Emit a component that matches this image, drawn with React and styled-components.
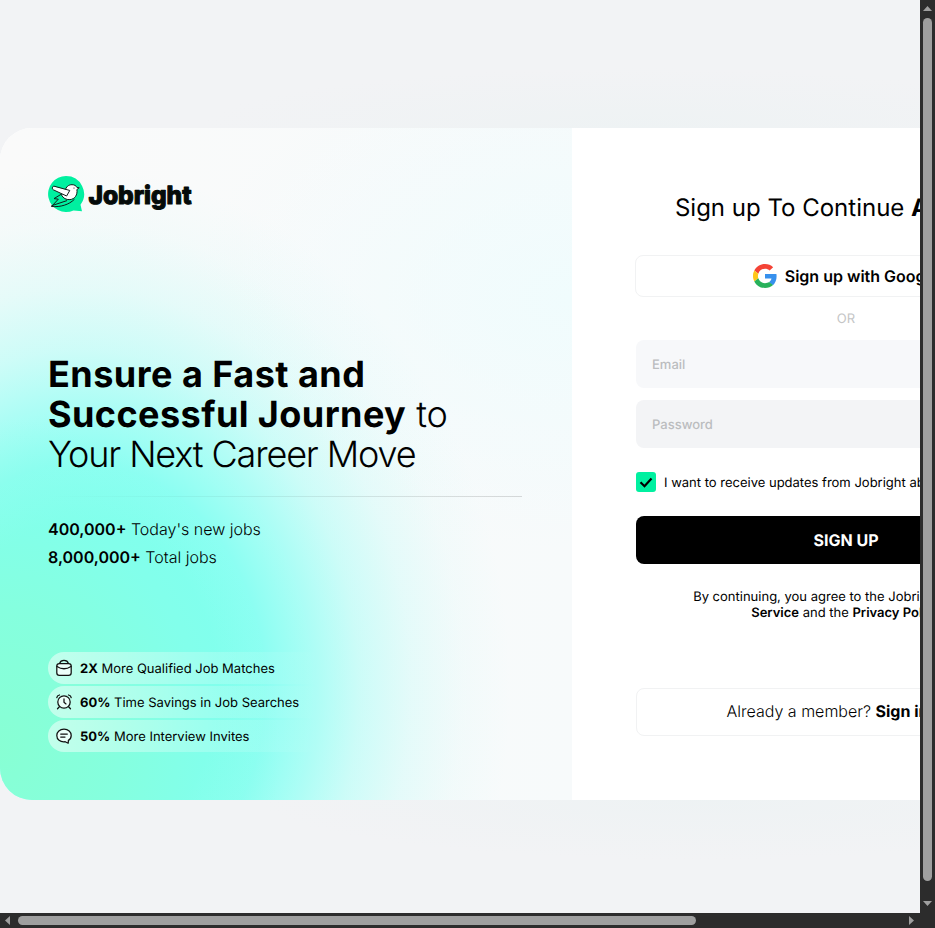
import React from 'react';
import styled, { createGlobalStyle } from 'styled-components';

const GlobalStyle = createGlobalStyle`
  *, *::before, *::after { box-sizing: border-box; }
  body { margin: 0; overflow: hidden; background: #f2f3f5; text-rendering: geometricPrecision; }
  button, input { font: inherit; letter-spacing: inherit; text-rendering: inherit; }
`;

const Viewport = styled.div`
  display: grid;
  grid-template-columns: minmax(0, 1fr) 15px;
  grid-template-rows: minmax(0, 1fr) 15px;
  width: 935px;
  height: 928px;
  overflow: hidden;
  background: #2c2c2c;
  font-family: Inter, "Liberation Sans", sans-serif;
  color: #000;
`;

const Page = styled.main`
  overflow: hidden;
  padding-top: 128px;
  background:
    radial-gradient(ellipse 440px 60px at 640px 128px, rgba(236, 242, 243, 0.7), rgba(236, 242, 243, 0)),
    radial-gradient(ellipse 440px 60px at 700px 800px, rgba(236, 242, 243, 0.7), rgba(236, 242, 243, 0)),
    #f2f3f5;
`;

const Card = styled.div`
  display: flex;
  width: 1120px;
  height: 672px;
  border-radius: 32px;
  overflow: hidden;
  background: #fff;
`;

const Intro = styled.section`
  display: flex;
  flex-direction: column;
  width: 572px;
  padding: 48px;
  background:
    radial-gradient(ellipse 280px 330px at 0 620px, rgba(136, 255, 210, 0.95) 0, rgba(136, 255, 212, 0.65) 40%, rgba(136, 255, 220, 0.27) 72%, rgba(136, 255, 226, 0) 100%),
    radial-gradient(ellipse 430px 520px at 80px 560px, #80fff0 0, #80fff0 32%, rgba(128, 255, 241, 0.9) 43%, rgba(138, 255, 243, 0.7) 54%, rgba(155, 254, 245, 0.47) 65%, rgba(175, 253, 246, 0.27) 77%, rgba(195, 252, 247, 0.11) 89%, rgba(220, 252, 250, 0) 100%),
    radial-gradient(ellipse 380px 250px at 572px 170px, #f0fcfd, rgba(240, 251, 253, 0)),
    linear-gradient(90deg, #fafafa, #f7fafb);
`;

const Logo = styled.svg`
  display: block;
  width: 148px;
  height: 36px;
  flex: none;
`;

const Headline = styled.h1`
  margin: 142px 0 0;
  font-size: 36px;
  line-height: 40px;
  font-weight: 300;
`;

const HeadlineLine = styled.span`
  display: block;
  white-space: nowrap;
  letter-spacing: ${(p) => p.$tracking};
`;

const Strong = styled.strong`
  font-weight: ${(p) => p.$weight || 700};
  letter-spacing: ${(p) => p.$tracking || 'inherit'};
`;

const Divider = styled.hr`
  width: 474px;
  height: 1px;
  flex: none;
  margin: 22px 0 18px;
  border: 0;
  background: linear-gradient(90deg, rgba(0, 0, 0, 0), rgba(0, 0, 0, 0.14));
`;

const Stat = styled.p`
  margin: 0;
  font-size: 16px;
  line-height: 28px;
  font-weight: 300;
`;

const Benefits = styled.ul`
  display: grid;
  gap: 2px;
  margin: auto 0 0;
  padding: 0;
  list-style: none;
`;

const Benefit = styled.li`
  display: flex;
  align-items: center;
  gap: 8px;
  width: 270px;
  height: 32px;
  padding-left: 8px;
  border-radius: 16px 0 0 16px;
  background: linear-gradient(90deg, rgba(255, 255, 255, 0.5), rgba(255, 255, 255, 0));
  font-size: 13px;
  white-space: nowrap;
`;

const SmallLabel = styled.span`
  padding-top: 2px;
`;

const BenefitIcon = styled.svg`
  width: 16px;
  height: 16px;
  flex: none;
  overflow: visible;
  fill: none;
  stroke: #111;
  stroke-width: 1.25;
  stroke-linecap: round;
  stroke-linejoin: round;
`;

const FormPanel = styled.form`
  display: flex;
  flex-direction: column;
  width: 548px;
  padding: 64px;
`;

const Title = styled.h2`
  margin: 0;
  font-size: 24px;
  line-height: 32px;
  font-weight: 400;
  text-align: center;
  white-space: nowrap;
`;

const GoogleButton = styled.button`
  display: flex;
  align-items: center;
  justify-content: center;
  gap: 7.5px;
  width: 421px;
  height: 42px;
  margin: 31px 0 0 -1px;
  padding: 0 0 0 1.5px;
  border: 1px solid #f1f2f3;
  border-radius: 8px;
  background: #fff;
  font-size: 16px;
  font-weight: 600;
  color: #000;
`;

const GoogleMark = styled.svg`
  width: 24px;
  height: 24px;
`;

const Separator = styled.span`
  margin-top: 13px;
  font-size: 13px;
  line-height: 18px;
  text-align: center;
  color: #c4c5c6;
`;

const Field = styled.input`
  height: 48px;
  margin-top: 12px;
  padding: 2px 16px 0;
  border: 0;
  border-radius: 8px;
  background: ${(p) => p.$tone};
  font-size: 13px;
  font-weight: 500;
  &::placeholder { color: #bbbdbf; opacity: 1; }
`;

const Consent = styled.label`
  display: flex;
  align-items: center;
  gap: 8px;
  height: 20px;
  margin-top: 24px;
  font-size: 13px;
  line-height: 20px;
  white-space: nowrap;
`;

const Tick = styled.svg`
  width: 20px;
  height: 20px;
  flex: none;
  border-radius: 3px;
  background: #00f0a0;
`;

const SubmitButton = styled.button`
  height: 48px;
  flex: none;
  margin-top: 24px;
  border: 0;
  border-radius: 8px;
  background: #000;
  color: #fff;
  font-size: 16px;
  font-weight: 700;
`;

const Terms = styled.p`
  margin: 25px 0 0;
  font-size: 13px;
  line-height: 16px;
  text-align: center;
`;

const SignIn = styled.div`
  display: flex;
  align-items: center;
  justify-content: center;
  height: 48px;
  margin-top: auto;
  padding-bottom: 2px;
  border: 1px solid #f1f2f3;
  border-radius: 8px;
  font-size: 16px;
  font-weight: 300;
  white-space: pre;
`;

const VerticalBar = styled.div`
  display: flex;
  flex-direction: column;
  align-items: center;
  gap: 7px;
  padding-top: 6px;
`;

const HorizontalBar = styled.div`
  display: flex;
  align-items: center;
  gap: 8px;
  padding-left: 5px;
`;

const VerticalThumb = styled.div`
  width: 9px;
  height: 863px;
  margin-bottom: 13px;
  border-radius: 5px;
  background: #9f9f9f;
`;

const HorizontalThumb = styled.div`
  width: 678px;
  height: 9px;
  margin-right: 205px;
  border-radius: 5px;
  background: #9f9f9f;
`;

const Arrow = styled.svg`
  display: block;
  flex: none;
  width: ${(p) => (p.$vertical ? 9 : 5)}px;
  height: ${(p) => (p.$vertical ? 5 : 9)}px;
  fill: #9f9f9f;
`;

function Brand() {
  return (
    <Logo viewBox="0 0 148 36" role="img" aria-label="Jobright">
      <path fill="#00f0a0" d="M18 0a18 18 0 1 0 7.5 34.4L34 35.2l-1.500-6.500A18 18 0 0 0 18 0Z" />
      <g stroke="#101b18" strokeWidth="1" strokeLinejoin="round" strokeLinecap="round">
        <path fill="none" d="M12.800 18.500 6 22.600l4.300.6-6.800 7.300c9 .8 17.500-1.800 22.700-7M3.700 29.700l15-5" />
        <path fill="#fff" d="M17.300 14.300c.5-3.600 3.500-5.700 6.700-5.600 2.500 0 4.100 1 4.800 2.600l2.400.5-2.300 1.700c.8 5.300-2 9.700-7 10.100-3.900.2-6.500-1.200-8.300-4.300Z" />
        <path fill="#fff" d="M5.300 10.300c-1.500 1.200-1.300 2.800.2 3.600L18.600 20l3-5.200Z" />
        <circle cx="26" cy="12" r=".6" fill="#101b18" stroke="none" />
      </g>
      <text
        x="40.500" y="27.500" textLength="103" lengthAdjust="spacingAndGlyphs"
        fontFamily="Inter, sans-serif" fontSize="25" fontWeight="800"
        stroke="#050b0a" strokeWidth="1.100" strokeLinejoin="round" fill="#050b0a"
      >Jobright</text>
    </Logo>
  );
}

export default function App() {
  return (
    <>
      <GlobalStyle />
      <Viewport>
        <Page>
          <Card>
            <Intro>
              <Brand />
              <Headline>
                <HeadlineLine $tracking="0.47px"><Strong>Ensure a Fast and</Strong></HeadlineLine>
                <HeadlineLine $tracking="-0.2px"><Strong $tracking="0.43px">Successful Journey</Strong> to</HeadlineLine>
                <HeadlineLine $tracking="-1.13px">Your Next Career Move</HeadlineLine>
              </Headline>
              <Divider />
              <Stat><Strong $weight={600}>400,000+</Strong> Today's new jobs</Stat>
              <Stat><Strong $weight={600}>8,000,000+</Strong> Total jobs</Stat>
              <Benefits>
                <Benefit>
                  <BenefitIcon viewBox="0 0 16 16">
                    <path d="M3.600 3.400C4.200 1.400 5.600.4 8 .4s3.800 1 4.400 3" />
                    <rect x="0.8" y="3.500" width="14.400" height="11.800" rx="2.600" fill="#fff" fillOpacity=".7" />
                    <path d="M1 6.400c4.600 3.100 9.400 3.100 14 0" />
                  </BenefitIcon>
                  <SmallLabel><Strong>2X</Strong> More Qualified Job Matches</SmallLabel>
                </Benefit>
                <Benefit>
                  <BenefitIcon viewBox="0 0 16 16">
                    <circle cx="8" cy="8" r="6.200" fill="#fff" fillOpacity=".7" />
                    <path d="M8 4.900v3.400l2 1.600M.8 3.600C1 2.200 1.900 1.300 3.500 1M15.200 3.600C15 2.200 14.100 1.300 12.500 1M3.400 12.800l-1.900 2M12.600 12.800l1.900 2" />
                  </BenefitIcon>
                  <SmallLabel><Strong>60%</Strong> Time Savings in Job Searches</SmallLabel>
                </Benefit>
                <Benefit>
                  <BenefitIcon viewBox="0 0 16 16">
                    <path fill="#fff" fillOpacity=".7" d="M8 1.200c4.300 0 7.200 2.600 7.200 6.200 0 2.400-1.100 4-2.800 5l-.2 2.800-3-1.500C4 14.300.8 11.500.8 7.500.8 3.800 3.800 1.200 8 1.200Z" />
                    <path d="M4.700 6h6.600M4.700 9h4.300" />
                  </BenefitIcon>
                  <SmallLabel><Strong>50%</Strong> More Interview Invites</SmallLabel>
                </Benefit>
              </Benefits>
            </Intro>
            <FormPanel>
              <Title>Sign up To Continue <Strong>Applying</Strong></Title>
              <GoogleButton type="button">
                <GoogleMark viewBox="0 0 48 48">
                  <path fill="#f44336" d="M24 9.600c3.600 0 6.800 1.200 9.300 3.600l7-6.900C36 2.300 30.500 0 24 0 14.600 0 6.500 5.400 2.600 13.200l8 6.200C12.500 13.700 17.800 9.600 24 9.600Z" />
                  <path fill="#3790ed" d="M47.200 24.500c0-1.700-.2-3.100-.4-4.500H24v9.200h13c-.6 3-2.300 5.400-4.800 7.100l7.700 6c4.600-4.200 7.300-10.400 7.300-17.800Z" />
                  <path fill="#ffc619" d="M10.600 28.600a14.500 14.500 0 0 1 0-9.200l-8-6.200a24 24 0 0 0 0 21.600Z" />
                  <path fill="#28b15b" d="M24 48c6.500 0 12-2.100 16-5.800l-7.800-6c-2.100 1.400-4.900 2.300-8.200 2.300-6.200 0-11.500-4.200-13.400-9.900l-8 6.200C6.500 42.600 14.600 48 24 48Z" />
                </GoogleMark>
                Sign up with Google
              </GoogleButton>
              <Separator>OR</Separator>
              <Field type="email" placeholder="Email" $tone="#f7f8fa" />
              <Field type="password" placeholder="Password" $tone="#f3f4f6" />
              <Consent>
                <Tick viewBox="0 0 20 20">
                  <path d="m4.500 10.200 4 4 7-7.800" fill="none" stroke="#000" strokeWidth="2.200" />
                </Tick>
                <SmallLabel>I want to receive updates from Jobright about jobs</SmallLabel>
              </Consent>
              <SubmitButton type="button">SIGN UP</SubmitButton>
              <Terms>
                By continuing, you agree to the Jobright <Strong $weight={600}>Terms of</Strong><br />
                <Strong $weight={600}>Service</Strong> and the <Strong $weight={600}>Privacy Policy</Strong>
              </Terms>
              <SignIn>Already a member? <Strong>Sign in now</Strong></SignIn>
            </FormPanel>
          </Card>
        </Page>
        <VerticalBar>
          <Arrow $vertical viewBox="0 0 9 5"><path d="M0 5 4.500 0 9 5Z" /></Arrow>
          <VerticalThumb />
          <Arrow $vertical viewBox="0 0 9 5"><path d="M0 0 4.500 5 9 0Z" /></Arrow>
        </VerticalBar>
        <HorizontalBar>
          <Arrow viewBox="0 0 5 9"><path d="M5 0 0 4.500 5 9Z" /></Arrow>
          <HorizontalThumb />
          <Arrow viewBox="0 0 5 9"><path d="M0 0 5 4.500 0 9Z" /></Arrow>
        </HorizontalBar>
      </Viewport>
    </>
  );
}
